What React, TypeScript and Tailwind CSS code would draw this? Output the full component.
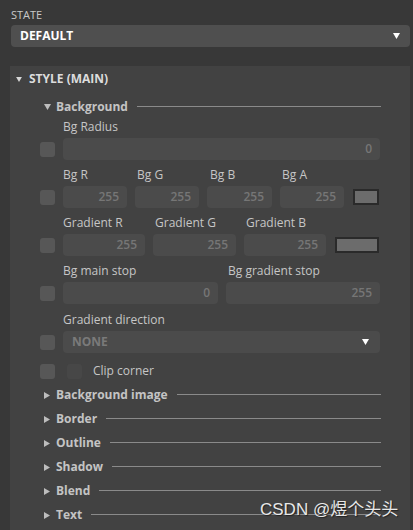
import React from "react";

const Down = ({ className = "" }: { className?: string }) => (
  <svg width="7" height="6" viewBox="0 0 7 6" className={className}>
    <polygon points="0,0 7,0 3.5,6" fill="currentColor" />
  </svg>
);
const Right = ({ className = "" }: { className?: string }) => (
  <svg width="6" height="7" viewBox="0 0 6 7" className={className}>
    <polygon points="0,0 6,3.5 0,7" fill="currentColor" />
  </svg>
);

const Check = ({ dark = false }: { dark?: boolean }) => (
  <div
    className={`w-[15px] h-[15px] rounded-[3px] shrink-0 ${dark ? "bg-[#474747]" : "bg-[#575757]"}`}
  />
);

const Input = ({ value, className = "" }: { value: string; className?: string }) => (
  <div
    className={`h-[22px] rounded-[4px] bg-[#4b4b4b] flex items-center justify-end pr-[8px] text-[12px] font-semibold text-[#767676] ${className}`}
  >
    {value}
  </div>
);

const Label = ({ children, className = "" }: { children: React.ReactNode; className?: string }) => (
  <div className={`h-[14px] leading-[14px] text-[12px] text-[#c6c6c6] whitespace-nowrap ${className}`}>{children}</div>
);

const Swatch = ({ className = "" }: { className?: string }) => (
  <div className={`border-2 border-[#2a2a2a] bg-[#6c6c6c] ${className}`} />
);

const SubHeader = ({ title, open = false }: { title: string; open?: boolean }) => (
  <div className="h-[24px] flex items-center pl-[34px] pr-[29px]">
    <div className="w-[12px] text-[#bdbdbd] flex items-center">{open ? <Down /> : <Right />}</div>
    <span className="text-[12px] font-bold text-[#c4c4c4] whitespace-nowrap">{title}</span>
    <div className="flex-1 h-px bg-[#8a8a8a] ml-[9px] -mt-[2px]" />
  </div>
);

export default function App() {
  return (
    <div className="w-[413px] h-[530px] bg-[#383838] overflow-hidden relative font-['Open_Sans',sans-serif]">
      <div className="pl-[11px] pr-[3px] pt-[8px]">
        <div className="text-[11px] leading-[14px] text-[#c8c8c8]">STATE</div>
        <div className="mt-[3px] h-[22px] rounded-[4px] bg-[#4f4f4f] flex items-center justify-between pl-[9px] pr-[10px]">
          <span className="text-[12px] font-bold text-white">DEFAULT</span>
          <Down className="text-white" />
        </div>
      </div>

      <div className="mt-[19px] ml-[10px] mr-[3px] bg-[#424242] h-[470px] pt-[1px]">
        <div className="h-[24px] flex items-center pl-[6px]">
          <div className="w-[13px] text-[#d8d8d8] flex items-center">
            <Down className="w-[6px] h-[5px]" />
          </div>
          <span className="text-[12px] font-bold text-[#dcdcdc]">STYLE (MAIN)</span>
        </div>

        <div className="mt-[4px]">
          <SubHeader title="Background" open />
        </div>

        <div className="pl-[30px] pr-[30px]">
          {/* Bg Radius */}
          <div className="mt-[1px] pl-[23px]">
            <Label>Bg Radius</Label>
          </div>
          <div className="mt-[4px] flex items-center gap-[8px]">
            <Check />
            <Input value="0" className="flex-1" />
          </div>

          {/* Bg RGBA */}
          <div className="mt-[8px] pl-[23px] flex gap-[8px]">
            <Label className="w-[64px]">Bg R</Label>
            <Label className="w-[64px] pl-[2px]">Bg G</Label>
            <Label className="w-[65px] pl-[3px]">Bg B</Label>
            <Label className="w-[64px] pl-[2px]">Bg A</Label>
          </div>
          <div className="mt-[4px] flex items-center gap-[8px]">
            <Check />
            <Input value="255" className="w-[64px]" />
            <Input value="255" className="w-[64px]" />
            <Input value="255" className="w-[65px]" />
            <Input value="255" className="w-[64px]" />
            <Swatch className="ml-[1px] w-[26px] h-[16px]" />
          </div>

          {/* Gradient RGB */}
          <div className="mt-[8px] pl-[23px] flex gap-[8px]">
            <Label className="w-[82px]">Gradient R</Label>
            <Label className="w-[83px] pl-[2px]">Gradient G</Label>
            <Label className="w-[82px] pl-[2px]">Gradient B</Label>
          </div>
          <div className="mt-[4px] flex items-center gap-[8px]">
            <Check />
            <Input value="255" className="w-[82px]" />
            <Input value="255" className="w-[83px]" />
            <Input value="255" className="w-[82px]" />
            <Swatch className="ml-[1px] w-[44px] h-[16px]" />
          </div>

          {/* Stops */}
          <div className="mt-[8px] pl-[23px] flex gap-[8px]">
            <Label className="w-[155px]">Bg main stop</Label>
            <Label className="w-[154px] pl-[2px]">Bg gradient stop</Label>
          </div>
          <div className="mt-[4px] flex items-center gap-[8px]">
            <Check />
            <Input value="0" className="w-[155px]" />
            <Input value="255" className="flex-1" />
          </div>

          {/* Gradient direction */}
          <div className="mt-[9px] pl-[23px]">
            <Label>Gradient direction</Label>
          </div>
          <div className="mt-[4px] flex items-center gap-[8px]">
            <Check />
            <div className="flex-1 h-[22px] rounded-[4px] bg-[#4b4b4b] flex items-center justify-between pl-[9px] pr-[11px]">
              <span className="text-[12px] font-bold text-[#7a7a7a]">NONE</span>
              <Down className="text-white" />
            </div>
          </div>

          {/* Clip corner */}
          <div className="mt-[6px] h-[24px] flex items-center">
            <Check />
            <div className="ml-[12px]">
              <Check dark />
            </div>
            <span className="ml-[11px] text-[12px] text-[#c6c6c6]">Clip corner</span>
          </div>
        </div>

        <SubHeader title="Background image" />
        <SubHeader title="Border" />
        <SubHeader title="Outline" />
        <SubHeader title="Shadow" />
        <SubHeader title="Blend" />
        <SubHeader title="Text" />
      </div>

      <div className="absolute left-[260px] top-[499px] text-[17px] leading-[22px] text-[#e8e8e8] font-['Liberation_Sans','Noto_Sans_CJK_SC',sans-serif] [text-shadow:1px_1px_1px_#222] whitespace-nowrap">
        CSDN @煜个头头
      </div>
    </div>
  );
}
